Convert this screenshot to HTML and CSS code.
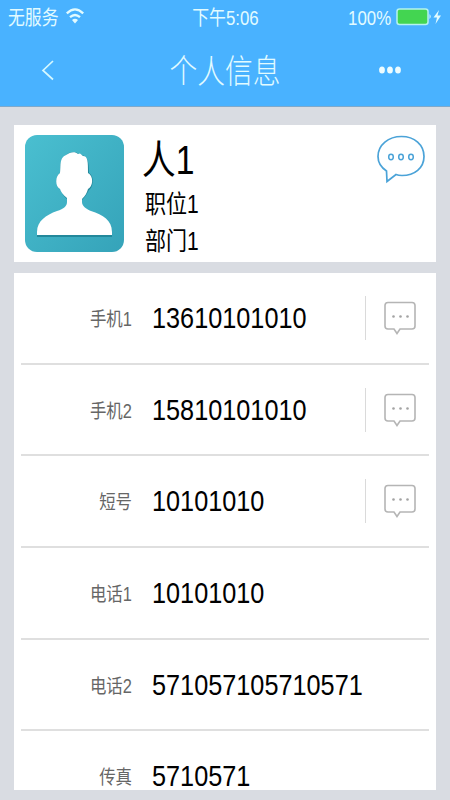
FILE: index.html
```html
<!DOCTYPE html>
<html lang="zh-CN">
<head>
<meta charset="utf-8">
<title>个人信息</title>
<link rel="stylesheet" href="styles.css">
</head>
<body>
<svg class="defs" width="0" height="0">
  <symbol id="sms" viewBox="0 0 34 36">
    <path d="M5 2.5H29Q32 2.5 32 5.5V26Q32 29 29 29H17L14 33.500L11 29H5Q2 29 2 26V5.500Q2 2.500 5 2.500Z" fill="none" stroke="#b5b5b5" stroke-width="1.600"/>
    <g fill="#a3a3a3"><circle cx="10.500" cy="16.500" r="1.300"/><circle cx="17.500" cy="16.500" r="1.300"/><circle cx="24.500" cy="16.500" r="1.300"/></g>
  </symbol>
</svg>
<header class="top">
  <div class="status">
    <div class="carrier"><span class="narrow left">无服务</span></div>
    <svg class="wifi" width="20" height="18" viewBox="0 0 20 18">
      <g fill="none" stroke="#e2fbff" stroke-width="2.300"><path d="M1.800 6.300Q10 -1.500 18.200 6.300"/><path d="M5 10.200Q10 5.800 15 10.200"/></g>
      <path d="M7 13Q10 10.500 13 13L10 16.500Z" fill="#e2fbff"/>
    </svg>
    <div class="time"><span class="narrow center">下午5:06</span></div>
    <div class="percent"><span class="narrow right">100%</span></div>
    <svg class="battery" width="48" height="20" viewBox="0 0 48 20">
      <rect x="1" y="2" width="31" height="15.500" rx="2.500" fill="#43d551" stroke="#b5f3ee" stroke-width="1.500"/>
      <path d="M33.500 7Q36 9.500 33.500 12Z" fill="#d5faff"/>
      <path d="M43 3L37.500 10.500H41L39.500 17L45 8.500H41.500Z" fill="#e2fbff"/>
    </svg>
  </div>
  <nav class="nav">
    <svg class="back" width="16" height="24" viewBox="0 0 16 24"><path d="M13 3L3 12.500L13 21.500" fill="none" stroke="#d5f8ff" stroke-width="1.700"/></svg>
    <h1 class="title"><span class="narrow center">个人信息</span></h1>
    <svg class="more" width="24" height="10" viewBox="0 0 24 10"><g fill="#edfcff"><ellipse cx="4" cy="5" rx="2.900" ry="3.500"/><ellipse cx="12" cy="5" rx="2.900" ry="3.500"/><ellipse cx="20" cy="5" rx="2.900" ry="3.500"/></g></svg>
  </nav>
</header>
<main class="page">
  <section class="profile">
    <svg class="avatar" width="99" height="117" viewBox="0 0 99 117">
      <defs><linearGradient id="teal" x1="0" y1="0" x2="1" y2="1"><stop offset="0" stop-color="#4abfd0"/><stop offset="1" stop-color="#35a3b9"/></linearGradient></defs>
      <rect width="99" height="117" rx="12" fill="url(#teal)"/>
      <path d="M12 101V98C12 87 21 81 32 77C39 75 42 73 42 69V64C38 61 37 58 36 55C31 53 30 41 35 38C36 30 34 24 41 20C46 16 51 16 55 20C63 20 64 27 64 38C70 41 68 53 64 55C62 59 60 62 57 65V69C57 73 61 75 66 77C78 81 87 86 87 98V102H12Z" fill="#23889b"/>
      <path d="M12 100V97C12 86 21 80 32 76C39 74 42 71 42 67V63C38 60 36 57 35 54C30 52 30 41 35 38C36 30 34 23 41 20C45 17 50 16 53 19L55 18.500L58 21C63 21 63 27 63 38C69 41 68 52 63 54C62 58 60 61 57 64V67C57 71 61 74 66 76C78 80 87 85 87 97V100Z" fill="#fff"/>
    </svg>
    <div class="who">
      <div class="name"><span class="narrow left">人1</span></div>
      <div class="detail"><span class="narrow left">职位1</span></div>
      <div class="detail"><span class="narrow left">部门1</span></div>
    </div>
    <svg class="chat" width="50" height="50" viewBox="0 0 50 50">
      <path d="M10.500 37C4.500 33 2 28 2 22.500C2 11 12.500 2.500 25.500 2.500S48 11 48 22.500S38.500 41.500 26 41.500Q22.500 41.500 20 40.500L11 47.500Z" fill="none" stroke="#4ba3d8" stroke-width="1.700"/>
      <g fill="none" stroke="#4ba3d8" stroke-width="1.500"><ellipse cx="15" cy="23" rx="2.300" ry="2.700"/><ellipse cx="25" cy="23" rx="2.300" ry="2.700"/><ellipse cx="35" cy="23" rx="2.300" ry="2.700"/></g>
    </svg>
  </section>
  <section class="contacts">
    <div class="row"><div class="label"><span class="narrow right">手机1</span></div><div class="value"><span class="narrow left">13610101010</span></div><div class="action"><svg width="34" height="36"><use href="#sms"/></svg></div></div>
    <div class="row"><div class="label"><span class="narrow right">手机2</span></div><div class="value"><span class="narrow left">15810101010</span></div><div class="action"><svg width="34" height="36"><use href="#sms"/></svg></div></div>
    <div class="row"><div class="label"><span class="narrow right">短号</span></div><div class="value"><span class="narrow left">10101010</span></div><div class="action"><svg width="34" height="36"><use href="#sms"/></svg></div></div>
    <div class="row"><div class="label"><span class="narrow right">电话1</span></div><div class="value"><span class="narrow left">10101010</span></div></div>
    <div class="row"><div class="label"><span class="narrow right">电话2</span></div><div class="value"><span class="narrow left">571057105710571</span></div></div>
    <div class="row last"><div class="label"><span class="narrow right">传真</span></div><div class="value"><span class="narrow left">5710571</span></div></div>
  </section>
</main>
</body>
</html>
```
FILE: styles.css
```css
* { box-sizing: border-box; }
body {
  margin: 0;
  width: 450px;
  height: 800px;
  overflow: hidden;
  display: flex;
  flex-direction: column;
  background: #d9dce2;
  color: #000;
  font-family: "Liberation Sans", "Noto Sans CJK SC", sans-serif;
}
svg { display: block; flex: none; }
.defs { display: none; }
.narrow { display: inline-block; white-space: nowrap; transform: scaleX(.842); }
.left { transform-origin: left center; }
.center { transform-origin: center; }
.right { transform-origin: right center; }

.top { height: 107px; flex: none; background: #49b2ff; color: #e2fbff; border-bottom: 1px solid #7fa9cb; }
.status {
  height: 34px;
  display: grid;
  grid-template-columns: 57px 60px 201px 73px 1fr;
  align-items: center;
  padding-left: 8px;
  font-size: 20px;
  line-height: 36px;
}
.carrier, .time, .percent { height: 34px; }
.wifi { margin-bottom: 3px; }
.time { text-align: center; }
.percent { text-align: right; padding-right: 8px; }
.battery { margin-left: -3px; }
.nav {
  height: 72px;
  display: grid;
  grid-template-columns: 60px 1fr 60px;
  align-items: center;
  padding: 0 40px;
}
.title { height: 72px; margin: 0; text-align: center; font-size: 33px; font-weight: 300; line-height: 76px; }
.more { justify-self: end; margin-right: 8px; }

.page {
  height: 693px;
  padding: 18px 14px 10px;
  display: flex;
  flex-direction: column;
  gap: 11px;
}
.profile {
  height: 137px;
  flex: none;
  display: flex;
  align-items: flex-start;
  background: #fff;
  padding: 10px 9px 0 11px;
}
.who { flex: 1; padding-left: 18px; }
.chat { margin-top: -1px; margin-right: 1px; }
.name { height: 51px; font-size: 40px; line-height: 50px; }
.detail { height: 37px; padding-left: 3px; font-size: 25px; line-height: 36px; }
.contacts { flex: 1; min-height: 0; background: #fff; padding: 0 7px; }
.row {
  height: 91.7px;
  display: grid;
  grid-template-columns: 111px 234px 1fr;
  align-items: center;
  border-bottom: 2px solid #dfdfdf;
}
.last { height: 58px; align-items: start; padding-top: 32px; border-bottom: 0; }
.label { position: relative; top: 1px; text-align: right; font-size: 19.5px; line-height: 22px; color: #666; }
.last .label { padding-top: 2px; }
.value { padding-left: 19.5px; font-size: 30px; line-height: 26px; }
.action { height: 44px; padding-left: 17px; margin-left: -1px; border-left: 1px solid #dadada; display: flex; align-items: center; }
```
